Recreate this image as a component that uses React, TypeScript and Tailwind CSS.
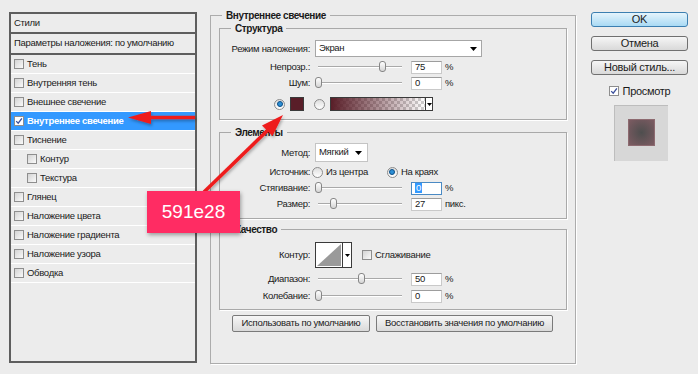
import React from "react";

const layers = [
  { label: "Тень" },
  { label: "Внутренняя тень" },
  { label: "Внешнее свечение" },
  { label: "Внутреннее свечение", active: true },
  { label: "Тиснение" },
  { label: "Контур", sub: true },
  { label: "Текстура", sub: true },
  { label: "Глянец" },
  { label: "Наложение цвета" },
  { label: "Наложение градиента" },
  { label: "Наложение узора" },
  { label: "Обводка" },
];

function CheckBox({ checked, white }: { checked?: boolean; white?: boolean }) {
  return (
    <span
      className={[
        "flex h-[10px] w-[10px] shrink-0 items-center justify-center border border-[#8e8e8e]",
        white ? "bg-white" : "bg-linear-to-br from-[#d4d4d4] to-[#fafafa]",
      ].join(" ")}
    >
      {checked && (
        <svg viewBox="0 0 10 10" className="h-[8px] w-[8px]">
          <path d="M1.5 5.2 L4 7.8 L8.6 1.6" fill="none" stroke="#3a4f9c" strokeWidth="1.6" />
        </svg>
      )}
    </span>
  );
}

function Radio({ on }: { on?: boolean }) {
  return (
    <span className="flex h-[11px] w-[11px] shrink-0 items-center justify-center rounded-full border border-[#8c8c8c] bg-linear-to-b from-[#dedede] to-white">
      {on && <span className="h-[6px] w-[6px] rounded-full border border-[#0d4f86] bg-[#2c8fd6]" />}
    </span>
  );
}

function DownArrow() {
  return (
    <svg viewBox="0 0 7 4" className="h-[4px] w-[7px]">
      <polygon points="0,0 7,0 3.5,4" fill="#000" />
    </svg>
  );
}

function Slider({ thumb }: { thumb: number }) {
  return (
    <div className="relative h-[16px] w-[90px] shrink-0">
      <div className="absolute left-[3px] top-[7px] h-[2px] w-[84px] border-t border-[#a9a9a9] bg-white" />
      <div
        className="absolute top-[2px] h-[11px] w-[7px] rounded-[3px] border border-[#868686] bg-linear-to-b from-white to-[#d5d5d5]"
        style={{ left: thumb - 3 }}
      />
    </div>
  );
}

function NumField({ value, unit, focus }: { value: string; unit: string; focus?: boolean }) {
  return (
    <>
      <div
        className={[
          "ml-[6px] flex h-[13px] w-[31px] items-center bg-white pl-[3px] leading-none",
          focus ? "border border-[#4a8ac4]" : "border border-[#c9c9c9] border-t-[#9d9d9d]",
        ].join(" ")}
      >
        {focus ? <span className="bg-[#3399ff] px-[1px] text-white">{value}</span> : value}
      </div>
      <span className="ml-[3px]">{unit}</span>
    </>
  );
}

function Row({ label, className, children }: { label: string; className?: string; children?: React.ReactNode }) {
  return (
    <div className={["flex items-center", className].join(" ")}>
      <span className="w-[90px] shrink-0 text-right leading-none">{label}</span>
      <div className="ml-[5px] flex items-center">{children}</div>
    </div>
  );
}

function Group({ title, className, children }: { title: string; className?: string; children: React.ReactNode }) {
  return (
    <fieldset className={["border border-[#a9a9a9] shadow-[1px_1px_0_#fff]", className].join(" ")}>
      <legend className="ml-[11px] px-[4px] text-[10px] font-bold leading-[13px] tracking-[-0.4px] text-[#1a1a1a]">
        {title}
      </legend>
      {children}
    </fieldset>
  );
}

function SideButton({ label, primary }: { label: string; primary?: boolean }) {
  return (
    <button
      type="button"
      className={[
        "flex h-[15px] w-[97px] items-center justify-center rounded-[3px] border text-[11px] leading-none tracking-[-0.3px] text-[#1c1c1c]",
        primary
          ? "border-[#3c7fb1] bg-linear-to-b from-[#e5f4fc] to-[#a9daf4]"
          : "border-[#707070] bg-linear-to-b from-[#f6f6f6] to-[#d9d9d9]",
      ].join(" ")}
    >
      {label}
    </button>
  );
}

export default function App() {
  return (
    <div className="relative flex h-[374px] w-[698px] items-start overflow-hidden bg-[#ececec] font-['Liberation_Sans',Arial,sans-serif] text-[9.5px] tracking-[-0.3px] text-[#1a1a1a]">
      {/* styles list */}
      <div className="ml-[9px] mt-[12px] flex h-[351px] w-[188px] shrink-0 flex-col border-2 border-[#5e5e5e]">
        <div className="flex h-[20px] items-center border-b-2 border-[#5e5e5e] pl-[3px]">Стили</div>
        <div className="flex h-[21px] items-center border-b-2 border-[#5e5e5e] pl-[3px]">
          Параметры наложения: по умолчанию
        </div>
        {layers.map((l) => (
          <div
            key={l.label}
            className={[
              "flex h-[19px] items-center border-b border-white",
              l.sub ? "pl-[16px]" : "pl-[3px]",
              l.active ? "bg-[#3399ff] font-bold text-white" : "",
            ].join(" ")}
          >
            <CheckBox checked={l.active} white={l.active} />
            <span className="ml-[3px]">{l.label}</span>
          </div>
        ))}
      </div>

      {/* main settings */}
      <fieldset className="ml-[13px] mt-[9px] h-[355px] w-[366px] shrink-0 border border-[#acacac] px-[8px] shadow-[1px_1px_0_#fff]">
        <legend className="ml-[3px] px-[4px] text-[10px] font-bold leading-[13px] tracking-[-0.4px]">
          Внутреннее свечение
        </legend>

        <Group title="Структура" className="pb-[8px] pt-[5px]">
          <Row label="Режим наложения:" className="h-[17px]">
            <div className="flex h-[17px] w-[167px] items-center justify-between border border-[#a6a6a6] bg-white pl-[3px] pr-[4px]">
              Экран
              <DownArrow />
            </div>
          </Row>
          <Row label="Непрозр.:" className="mt-[2px] h-[16px]">
            <Slider thumb={67} />
            <NumField value="75" unit="%" />
          </Row>
          <Row label="Шум:" className="h-[16px]">
            <Slider thumb={3} />
            <NumField value="0" unit="%" />
          </Row>
          <div className="mt-[6px] flex h-[14px] items-center pl-[54px]">
            <Radio on />
            <span className="ml-[5px] h-[14px] w-[14px] border border-[#3a3a3a] bg-[#591e28]" />
            <span className="ml-[10px]">
              <Radio />
            </span>
            <div className="ml-[5px] flex h-[14px] w-[103px] border border-[#3a3a3a]">
              <div className="flex-1 bg-[repeating-conic-gradient(#cfcfcf_0_25%,#ffffff_0_50%)] [background-size:6px_6px]">
                <div className="h-full w-full bg-linear-to-r from-[#591e28] to-[#591e2800]" />
              </div>
              <div className="flex w-[7px] items-center justify-center border-l border-[#3a3a3a] bg-white">
                <svg viewBox="0 0 5 3" className="h-[3px] w-[5px]">
                  <polygon points="0,0 5,0 2.5,3" fill="#000" />
                </svg>
              </div>
            </div>
          </div>
        </Group>

        <Group title="Элементы" className="mt-[6px] pb-[6px] pt-[4px]">
          <Row label="Метод:" className="h-[19px]">
            <div className="flex h-[19px] w-[53px] items-center justify-between border border-[#c4c4c4] bg-white pl-[3px] pr-[5px]">
              Мягкий
              <DownArrow />
            </div>
          </Row>
          <Row label="Источник:" className="mt-[2px] h-[16px]">
            <span className="-ml-[3px]">
              <Radio />
            </span>
            <span className="ml-[3px]">Из центра</span>
            <span className="ml-[19px]">
              <Radio on />
            </span>
            <span className="ml-[3px]">На краях</span>
          </Row>
          <Row label="Стягивание:" className="h-[16px]">
            <Slider thumb={3} />
            <NumField value="0" unit="%" focus />
          </Row>
          <Row label="Размер:" className="h-[16px]">
            <Slider thumb={18} />
            <NumField value="27" unit="пикс." />
          </Row>
        </Group>

        <Group title="Качество" className="mt-[4px] pb-[5px] pt-[6px]">
          <Row label="Контур:" className="h-[26px]">
            <div className="flex h-[26px] w-[37px] border border-[#3a3a3a] bg-white">
              <svg viewBox="0 0 26 24" className="h-[24px] w-[26px]" preserveAspectRatio="none">
                <polygon points="1,23 25,1 25,23" fill="#9a9a9a" />
              </svg>
              <div className="flex w-[9px] items-center justify-center border-l border-[#3a3a3a]">
                <svg viewBox="0 0 5 3" className="h-[3px] w-[5px]">
                  <polygon points="0,0 5,0 2.5,3" fill="#000" />
                </svg>
              </div>
            </div>
            <span className="ml-[10px]">
              <CheckBox />
            </span>
            <span className="ml-[3px]">Сглаживание</span>
          </Row>
          <Row label="Диапазон:" className="mt-[3px] h-[16px]">
            <Slider thumb={46} />
            <NumField value="50" unit="%" />
          </Row>
          <Row label="Колебание:" className="mt-[1px] h-[16px]">
            <Slider thumb={3} />
            <NumField value="0" unit="%" />
          </Row>
        </Group>

        <div className="mt-[5px] flex pl-[13px]">
          <button
            type="button"
            className="flex h-[17px] w-[138px] items-center justify-center whitespace-nowrap rounded-[2px] border border-[#7a7a7a] bg-linear-to-b from-[#f7f7f7] to-[#dadada]"
          >
            Использовать по умолчанию
          </button>
          <button
            type="button"
            className="ml-[6px] flex h-[17px] w-[177px] items-center justify-center whitespace-nowrap rounded-[2px] border border-[#7a7a7a] bg-linear-to-b from-[#f7f7f7] to-[#dadada]"
          >
            Восстановить значения по умолчанию
          </button>
        </div>
      </fieldset>

      {/* right column */}
      <div className="ml-[15px] mt-[12px] flex w-[97px] shrink-0 flex-col items-center">
        <SideButton label="OK" primary />
        <div className="mt-[9px]">
          <SideButton label="Отмена" />
        </div>
        <div className="mt-[9px]">
          <SideButton label="Новый стиль..." />
        </div>
        <div className="mt-[8px] flex items-center text-[11px]">
          <CheckBox checked white />
          <span className="ml-[4px]">Просмотр</span>
        </div>
        <div className="ml-[3px] mt-[5px] flex h-[56px] w-[54px] items-center justify-center bg-[#d7d7d7] shadow-[inset_1px_1px_0_#bdbdbd]">
          <div className="h-[27px] w-[27px] border border-[#8d6a70] bg-[radial-gradient(circle,#4e4e4e,#7d5b62)]" />
        </div>
      </div>

      {/* annotations */}
      <svg className="pointer-events-none absolute left-0 top-0 h-[374px] w-[698px]" viewBox="0 0 698 374">
        <defs>
          <filter id="sh" x="-20%" y="-20%" width="140%" height="140%">
            <feDropShadow dx="1" dy="2" stdDeviation="1.5" floodColor="#000" floodOpacity="0.3" />
          </filter>
        </defs>
        <g filter="url(#sh)" fill="#ee1c1c" stroke="#ee1c1c">
          <line x1="195" y1="117.5" x2="146" y2="117.5" strokeWidth="3.5" />
          <polygon points="128,117.5 151,111 151,124" stroke="none" />
          <line x1="204" y1="192" x2="270" y2="128" strokeWidth="3.5" />
          <polygon points="283,115 272.5,136 262,125.5" stroke="none" />
        </g>
      </svg>
      <div className="absolute left-[147px] top-[191px] flex h-[42px] w-[93px] items-center justify-center bg-[#ff2c63] text-[19px] tracking-normal text-white shadow-[1px_2px_4px_rgba(0,0,0,0.35)]">
        591e28
      </div>
    </div>
  );
}
